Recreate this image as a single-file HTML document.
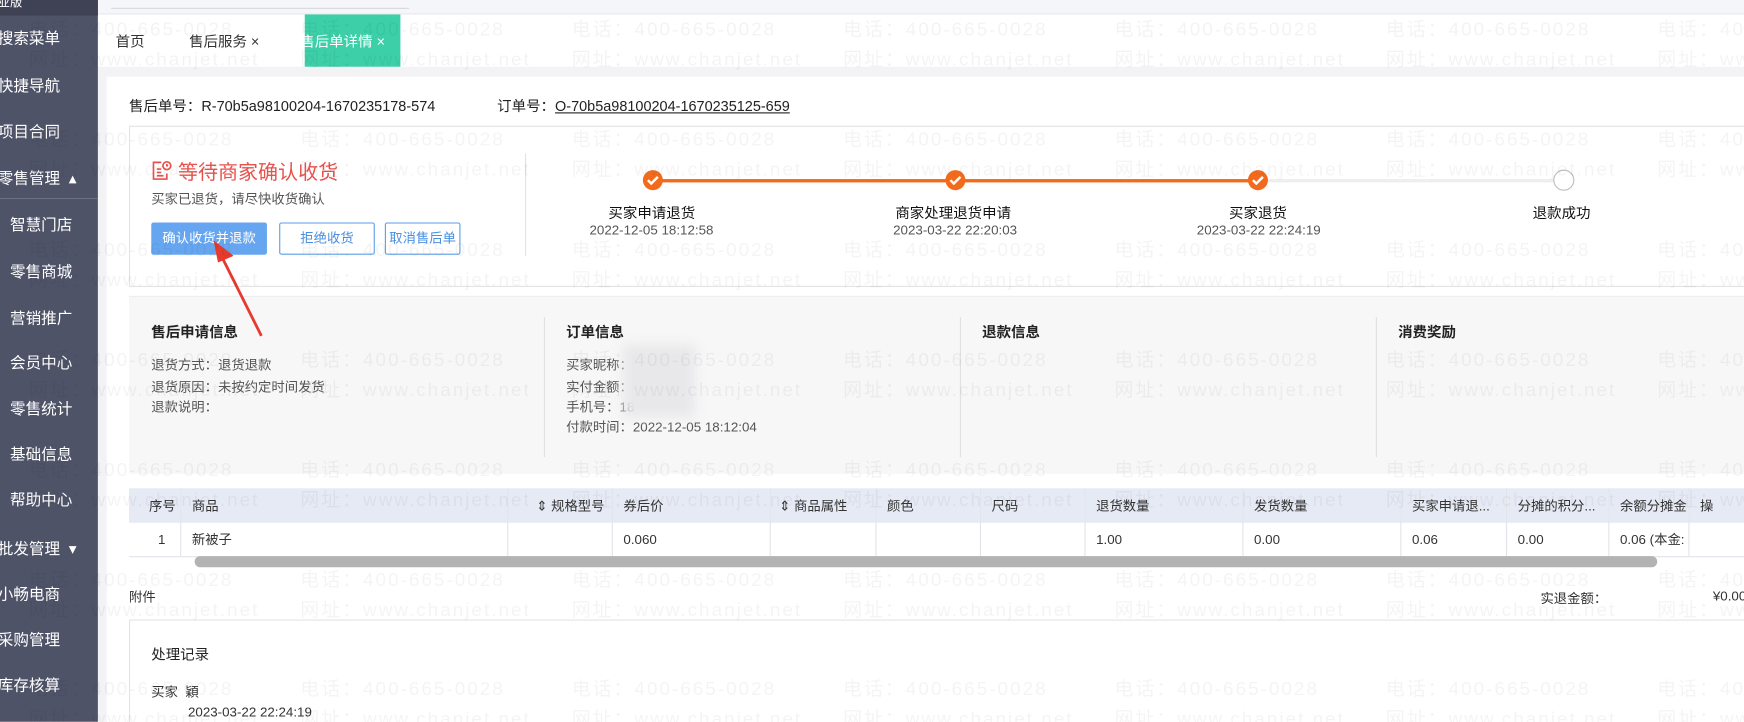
<!DOCTYPE html>
<html><head><meta charset="utf-8"><style>
*{margin:0;padding:0;box-sizing:border-box}
html,body{width:1744px;height:722px;overflow:hidden;background:#fff}
#w{position:absolute;left:0;top:0;width:1568px;height:649px;transform:scale(1.11224);transform-origin:0 0;font-family:"Liberation Sans","Noto Sans CJK SC",sans-serif;color:#333;overflow:hidden}
.a{position:absolute;white-space:nowrap}
.sb{position:absolute;left:0;top:0;width:88px;height:649px;background:#4f5368;z-index:2}
.sb .a{color:#fff;font-size:14px;left:-2px}
.wm{position:absolute;color:#000;opacity:.045;font-size:17px;line-height:20px;white-space:nowrap;letter-spacing:1.8px}
.btn{position:absolute;height:29px;font-size:12px;line-height:27px;text-align:center;border:1px solid #5b9ee8;color:#4a8fe0;border-radius:2px;background:#fff}
.t{font-size:13px;font-weight:bold;color:#222}
.s{font-size:12px;color:#555}
th,td{font-size:12px;text-align:left;padding-left:10px;border-right:1px solid #e2e4ea;font-weight:normal;color:#333}
</style></head><body><div id="w">
<div class="a" style="left:88px;top:0;width:1480px;height:13px;background:#f5f6fa;border-bottom:1px solid #e8e8ec"></div>
<div class="a" style="left:100px;top:7px;width:268px;height:1px;background:#d8d8dc"></div>
<div class="a" style="left:88px;top:13px;width:1480px;height:47px;background:#fff"></div>
<div class="a" style="left:88px;top:60px;width:1480px;height:9px;background:#f3f3f5"></div>
<div class="a" style="left:104px;top:27px;font-size:13px">首页</div>
<div class="a" style="left:170px;top:27px;font-size:13px">售后服务 ×</div>
<div class="a" style="left:274px;top:13px;width:86px;height:47px;background:#3ccfa8"></div>
<div class="a" style="left:270px;top:27px;font-size:13px;color:#fff">售后单详情 ×</div>
<div class="sb">
<div class="a" style="left:0;top:0;width:88px;height:14px;background:#3f4255"></div>
<div class="a" style="top:-6px;font-size:11px">业版</div>
<div class="a" style="top:24px">搜索菜单</div>
<div class="a" style="top:67px">快捷导航</div>
<div class="a" style="top:108px">项目合同</div>
<div class="a" style="top:150px">零售管理 &nbsp;▴</div>
<div class="a" style="left:0;top:178px;width:88px;height:1px;background:#6b6f82"></div>
<div class="a" style="left:9px;top:192px">智慧门店</div>
<div class="a" style="left:9px;top:234px">零售商城</div>
<div class="a" style="left:9px;top:276px">营销推广</div>
<div class="a" style="left:9px;top:316px">会员中心</div>
<div class="a" style="left:9px;top:357px">零售统计</div>
<div class="a" style="left:9px;top:398px">基础信息</div>
<div class="a" style="left:9px;top:439px">帮助中心</div>
<div class="a" style="top:483px">批发管理 &nbsp;▾</div>
<div class="a" style="top:524px">小畅电商</div>
<div class="a" style="top:565px">采购管理</div>
<div class="a" style="top:606px">库存核算</div>
</div>
<div class="a" style="left:88px;top:69px;width:8px;height:580px;background:#f3f3f5"></div>
<div class="a" style="left:116px;top:85px;font-size:13px;color:#222">售后单号：R-70b5a98100204-1670235178-574</div>
<div class="a" style="left:447px;top:85px;font-size:13px;color:#222">订单号：<u>O-70b5a98100204-1670235125-659</u></div>
<div class="a" style="left:116px;top:113px;width:1460px;height:145px;border:1px solid #e3e3e3"></div>
<svg class="a" style="left:136px;top:144px" width="19" height="19" viewBox="0 0 19 19" fill="none" stroke="#e8524d" stroke-width="1.5"><path d="M9 2H2v15h12v-5M5 8h4M5 11h4M5 14h6"/><circle cx="14" cy="5" r="3.5"/><path d="M14 3.5V5h1.2"/></svg>
<div class="a" style="left:160px;top:141px;font-size:18px;color:#e8524d">等待商家确认收货</div>
<div class="a" style="left:136px;top:170px;font-size:12px;color:#555">买家已退货，请尽快收货确认</div>
<div class="btn" style="left:136px;top:200px;width:104px;background:#66a6f0;border-color:#66a6f0;color:#fff">确认收货并退款</div>
<div class="btn" style="left:251px;top:200px;width:86px">拒绝收货</div>
<div class="btn" style="left:346px;top:200px;width:68px">取消售后单</div>
<div class="a" style="left:472px;top:138px;width:1px;height:92px;background:#e3e3e3"></div>
<div class="a" style="left:595px;top:161px;width:256px;height:3px;background:#f26b1d"></div>
<div class="a" style="left:867px;top:161px;width:256px;height:3px;background:#f26b1d"></div>
<div class="a" style="left:1139px;top:161px;width:258px;height:3px;background:#eee"></div>
<svg class="a" style="left:577px;top:152px" width="20" height="20"><circle cx="10" cy="10" r="9" fill="#f26b1d"/><path d="M5.5 10l3 3 6-6" stroke="#fff" stroke-width="2.2" fill="none"/></svg>
<svg class="a" style="left:849px;top:152px" width="20" height="20"><circle cx="10" cy="10" r="9" fill="#f26b1d"/><path d="M5.5 10l3 3 6-6" stroke="#fff" stroke-width="2.2" fill="none"/></svg>
<svg class="a" style="left:1121px;top:152px" width="20" height="20"><circle cx="10" cy="10" r="9" fill="#f26b1d"/><path d="M5.5 10l3 3 6-6" stroke="#fff" stroke-width="2.2" fill="none"/></svg>
<svg class="a" style="left:1396px;top:152px" width="20" height="20"><circle cx="10" cy="10" r="9" fill="#fff" stroke="#bbb"/></svg>
<div class="a t" style="left:547px;top:181px;font-weight:normal;color:#111">买家申请退货</div>
<div class="a s" style="left:530px;top:200px">2022-12-05 18:12:58</div>
<div class="a t" style="left:805px;top:181px;font-weight:normal;color:#111">商家处理退货申请</div>
<div class="a s" style="left:803px;top:200px">2023-03-22 22:20:03</div>
<div class="a t" style="left:1105px;top:181px;font-weight:normal;color:#111">买家退货</div>
<div class="a s" style="left:1076px;top:200px">2023-03-22 22:24:19</div>
<div class="a t" style="left:1378px;top:181px;font-weight:normal;color:#111">退款成功</div>
<div class="a" style="left:116px;top:266px;width:1460px;height:160px;background:#f7f7f7;border-top:1px solid #eee"></div>
<div class="a" style="left:489px;top:285px;width:1px;height:126px;background:#e0e0e0"></div>
<div class="a" style="left:863px;top:285px;width:1px;height:126px;background:#e0e0e0"></div>
<div class="a" style="left:1237px;top:285px;width:1px;height:126px;background:#e0e0e0"></div>
<div class="a t" style="left:136px;top:288px">售后申请信息</div>
<div class="a t" style="left:509px;top:288px">订单信息</div>
<div class="a t" style="left:883px;top:288px">退款信息</div>
<div class="a t" style="left:1257px;top:288px">消费奖励</div>
<div class="a s" style="left:136px;top:319px">退货方式：退货退款</div>
<div class="a s" style="left:136px;top:339px">退货原因：未按约定时间发货</div>
<div class="a s" style="left:136px;top:357px">退款说明：</div>
<div class="a s" style="left:509px;top:319px">买家昵称：</div>
<div class="a s" style="left:509px;top:339px">实付金额：</div>
<div class="a s" style="left:509px;top:357px">手机号：18</div>
<div class="a s" style="left:509px;top:375px">付款时间：2022-12-05 18:12:04</div>
<div class="a" style="left:560px;top:310px;width:65px;height:65px;background:#e8e8ea;filter:blur(5px)"></div>
<table class="a" style="left:116px;top:439px;border-collapse:collapse;width:1460px;table-layout:fixed">
<colgroup><col style="width:46px"><col style="width:294px"><col style="width:94px"><col style="width:142px"><col style="width:95px"><col style="width:94px"><col style="width:94px"><col style="width:142px"><col style="width:142px"><col style="width:95px"><col style="width:92px"><col style="width:72px"><col></colgroup>
<tr style="height:31px;background:#e6eaf5"><th style="padding-left:18px">序号</th><th>商品</th><th style="text-align:right;padding-right:6px">⇕ 规格型号</th><th>券后价</th><th style="padding-left:8px">⇕ 商品属性</th><th>颜色</th><th>尺码</th><th>退货数量</th><th>发货数量</th><th>买家申请退...</th><th>分摊的积分...</th><th>余额分摊金</th><th>操</th></tr>
<tr style="height:30px;border-bottom:1px solid #e2e4ea"><td style="padding-left:26px">1</td><td>新被子</td><td></td><td>0.060</td><td></td><td></td><td></td><td>1.00</td><td>0.00</td><td>0.06</td><td>0.00</td><td>0.06 (本金:</td><td></td></tr>
</table>
<div class="a" style="left:175px;top:500px;width:1315px;height:10px;border-radius:5px;background:#b3b3b3"></div>
<div class="a" style="left:116px;top:528px;font-size:12px">附件</div>
<div class="a" style="left:1385px;top:529px;font-size:12px">实退金额：</div>
<div class="a" style="left:1540px;top:529px;font-size:12px">¥0.00</div>
<div class="a" style="left:116px;top:557px;width:1460px;height:100px;border:1px solid #e3e3e3"></div>
<div class="a" style="left:136px;top:578px;font-size:13px;color:#222">处理记录</div>
<div class="a" style="left:136px;top:613px;font-size:12px">买家 &nbsp;穎</div>
<div class="a" style="left:169px;top:633px;font-size:12px">2023-03-22 22:24:19</div>
<svg class="a" style="left:180px;top:210px" width="70" height="100"><path d="M55 92L18 18" stroke="#e53a2d" stroke-width="2.5"/><path d="M12 6L30 20L16 26Z" fill="#e53a2d"/></svg>
<div id="wmc" class="a" style="left:0;top:0;width:1568px;height:649px;pointer-events:none;z-index:3"></div>
<script>
var h='';
for(var y=17;y<660;y+=98.9){for(var x=26;x<1600;x+=244){
h+='<div class="wm" style="left:'+x+'px;top:'+y+'px">电话：400-665-0028</div>';
h+='<div class="wm" style="left:'+x+'px;top:'+(y+27)+'px">网址：www.chanjet.net</div>';}}
document.getElementById('wmc').innerHTML=h;
</script>
</div></body></html>
